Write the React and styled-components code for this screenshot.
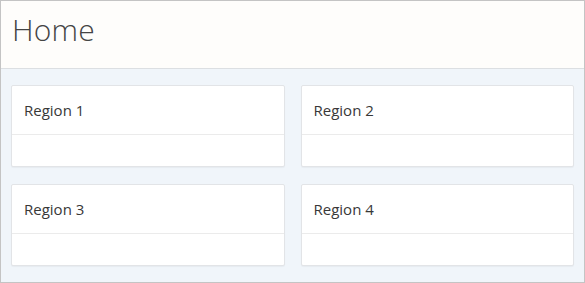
import React from 'react';
import styled, { createGlobalStyle } from 'styled-components';

const GlobalStyle = createGlobalStyle`
  html, body {
    margin: 0;
    padding: 0;
  }
  body {
    font-family: "Open Sans", "Noto Sans", sans-serif;
  }
`;

const Page = styled.div`
  width: 585px;
  height: 283px;
  box-sizing: border-box;
  border: 1px solid #c4c4c4;
  background-color: #f0f5fa;
  display: flex;
  flex-direction: column;
`;

const Header = styled.header`
  height: 67px;
  background-color: #fefdfb;
  border-bottom: 1px solid #dcdfe2;
  display: flex;
  align-items: center;
  padding-left: 11px;
  flex-shrink: 0;
`;

const Title = styled.h1`
  margin: 0;
  font-size: 30px;
  font-weight: 350;
  color: #444;
  letter-spacing: 0.2px;
  padding-bottom: 10px;
`;

const Grid = styled.main`
  display: grid;
  grid-template-columns: 1fr 1fr;
  column-gap: 16px;
  row-gap: 17px;
  padding: 16px 10px 15px 10px;
`;

const Card = styled.section`
  background-color: #fff;
  border: 1px solid #e2e4e7;
  border-radius: 2px;
  box-shadow: 0 1px 1px rgba(0, 0, 0, 0.04);
  height: 82px;
  box-sizing: border-box;
  display: flex;
  flex-direction: column;
`;

const CardHead = styled.div`
  height: 48px;
  border-bottom: 1px solid #ebebeb;
  display: flex;
  align-items: center;
  padding-left: 12px;
  font-size: 15px;
  color: #383838;
`;

const regions = ['Region 1', 'Region 2', 'Region 3', 'Region 4'];

const App = () => (
  <>
    <GlobalStyle />
    <Page>
      <Header>
        <Title>Home</Title>
      </Header>
      <Grid>
        {regions.map((r) => (
          <Card key={r}>
            <CardHead>{r}</CardHead>
          </Card>
        ))}
      </Grid>
    </Page>
  </>
);

export default App;
